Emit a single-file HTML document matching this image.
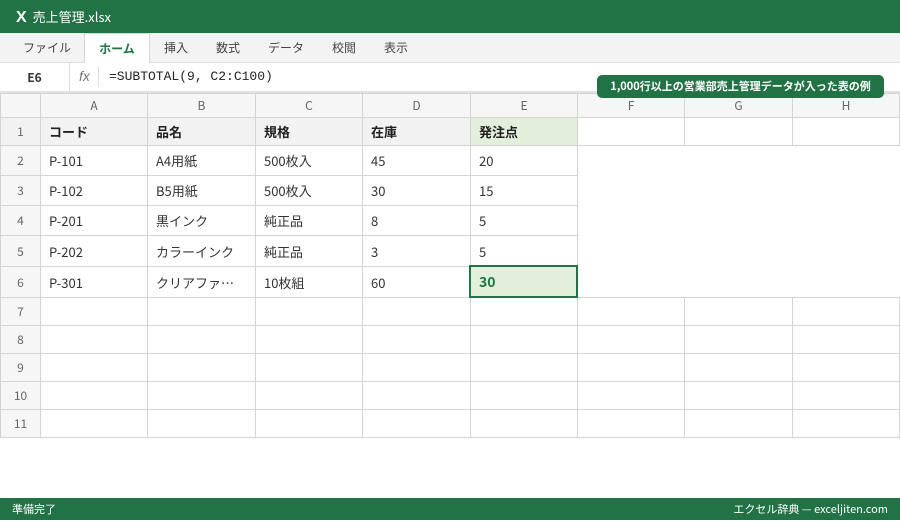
<!DOCTYPE html>
<html><head><meta charset="utf-8"><style>
*{margin:0;padding:0;box-sizing:border-box}
body{width:900px;height:520px;position:relative;overflow:hidden;background:#fff;font-family:"Noto Sans CJK JP","Liberation Sans",sans-serif;color:#333}
.title{position:absolute;left:0;top:0;width:900px;height:33px;background:#217346;color:#fff;font-size:13px;line-height:33px;padding-left:16px}
.title b{font-size:16px;margin-right:6px;font-family:"Liberation Sans",sans-serif}
.tabs{position:absolute;left:0;top:33px;width:900px;height:30px;background:#f3f3f3;border-bottom:1px solid #ddd}
.tab{position:absolute;top:0;height:30px;line-height:30px;font-size:12px;color:#444}
.tab.on{background:#fff;border:1px solid #d6d6d6;border-bottom:none;height:31px;color:#217346;font-weight:bold;text-align:center}
.fbar{position:absolute;left:0;top:63px;width:900px;height:30px;background:#fff;border-bottom:2px solid #e1e1e1}
.nb{position:absolute;left:0;top:0;width:70px;height:28px;line-height:30px;text-align:center;font-size:12px;font-weight:bold;border-right:1px solid #ddd}
.fx{position:absolute;left:79px;top:5px;font-style:italic;color:#777;font-size:14px;font-family:"Liberation Sans",sans-serif}
.fsep{position:absolute;left:98px;top:4px;width:1px;height:20px;background:#ddd}
.ftext{position:absolute;left:109px;top:6px;font-family:"Liberation Mono",monospace;font-size:13px;color:#222}
table{position:absolute;left:0;top:93px;border-collapse:collapse;table-layout:fixed;font-size:13px}
td{border:1px solid #d4d4d4;padding:0 0 0 8px;white-space:nowrap;overflow:hidden}
tr.h td{background:#f6f6f6;color:#666;text-align:center;padding:0;font-size:12px}
td.r{background:#f6f6f6;color:#666;text-align:center;padding:0;font-size:12px}
tr.one td{background:#f2f2f2;font-weight:bold;color:#222}
tr.one td.r{font-weight:normal;color:#666}
tr.one td.g{background:#e2efda}
tr.one td.w{background:#fff}
td.n{border:none}
.sel{position:absolute;left:469px;top:265px;width:109px;height:33px;border:2px solid #217346;background:#e2efda;color:#217346;font-weight:bold;font-size:14px;line-height:31px;padding-left:8px}
.badge{position:absolute;left:597px;top:75px;width:287px;height:23px;background:#217346;color:#fff;border-radius:5px;font-size:11px;font-weight:bold;text-align:center;line-height:23px}
.status{position:absolute;left:0;top:498px;width:900px;height:22px;background:#217346;color:#fff;font-size:11px;line-height:23px}
</style></head><body>
<div class="title"><b>X</b>売上管理.xlsx</div>
<div class="tabs">
<div class="tab" style="left:23px">ファイル</div>
<div class="tab on" style="left:84px;width:66px">ホーム</div>
<div class="tab" style="left:164px">挿入</div>
<div class="tab" style="left:216px">数式</div>
<div class="tab" style="left:268px">データ</div>
<div class="tab" style="left:332px">校閲</div>
<div class="tab" style="left:384px">表示</div>
</div>
<div class="fbar"><div class="nb">E6</div><div class="fx">fx</div><div class="fsep"></div><div class="ftext">=SUBTOTAL(9, C2:C100)</div></div>
<table>
<colgroup><col style="width:40px"><col style="width:107px"><col style="width:108px"><col style="width:107px"><col style="width:108px"><col style="width:107px"><col style="width:107px"><col style="width:108px"><col style="width:107px"></colgroup>
<tr class="h" style="height:24px"><td></td><td>A</td><td>B</td><td>C</td><td>D</td><td>E</td><td>F</td><td>G</td><td>H</td></tr>
<tr class="one" style="height:28px"><td class="r">1</td><td>コード</td><td>品名</td><td>規格</td><td>在庫</td><td class="g">発注点</td><td class="w"></td><td class="w"></td><td class="w"></td></tr>
<tr style="height:30px"><td class="r">2</td><td>P-101</td><td>A4用紙</td><td>500枚入</td><td>45</td><td>20</td><td class="n"></td><td class="n"></td><td class="n"></td></tr>
<tr style="height:30px"><td class="r">3</td><td>P-102</td><td>B5用紙</td><td>500枚入</td><td>30</td><td>15</td><td class="n"></td><td class="n"></td><td class="n"></td></tr>
<tr style="height:30px"><td class="r">4</td><td>P-201</td><td>黒インク</td><td>純正品</td><td>8</td><td>5</td><td class="n"></td><td class="n"></td><td class="n"></td></tr>
<tr style="height:31px"><td class="r">5</td><td>P-202</td><td>カラーインク</td><td>純正品</td><td>3</td><td>5</td><td class="n"></td><td class="n"></td><td class="n"></td></tr>
<tr style="height:31px"><td class="r">6</td><td>P-301</td><td>クリアファ…</td><td>10枚組</td><td>60</td><td>30</td><td class="n"></td><td class="n"></td><td class="n"></td></tr>
<tr style="height:28px"><td class="r">7</td><td></td><td></td><td></td><td></td><td></td><td></td><td></td><td></td></tr>
<tr style="height:28px"><td class="r">8</td><td></td><td></td><td></td><td></td><td></td><td></td><td></td><td></td></tr>
<tr style="height:28px"><td class="r">9</td><td></td><td></td><td></td><td></td><td></td><td></td><td></td><td></td></tr>
<tr style="height:28px"><td class="r">10</td><td></td><td></td><td></td><td></td><td></td><td></td><td></td><td></td></tr>
<tr style="height:28px"><td class="r">11</td><td></td><td></td><td></td><td></td><td></td><td></td><td></td><td></td></tr>
</table>
<div class="sel">30</div>
<div class="badge">1,000行以上の営業部売上管理データが入った表の例</div>
<div class="status"><span style="position:absolute;left:12px">準備完了</span><span style="position:absolute;right:12px">エクセル辞典 — exceljiten.com</span></div>
</body></html>
